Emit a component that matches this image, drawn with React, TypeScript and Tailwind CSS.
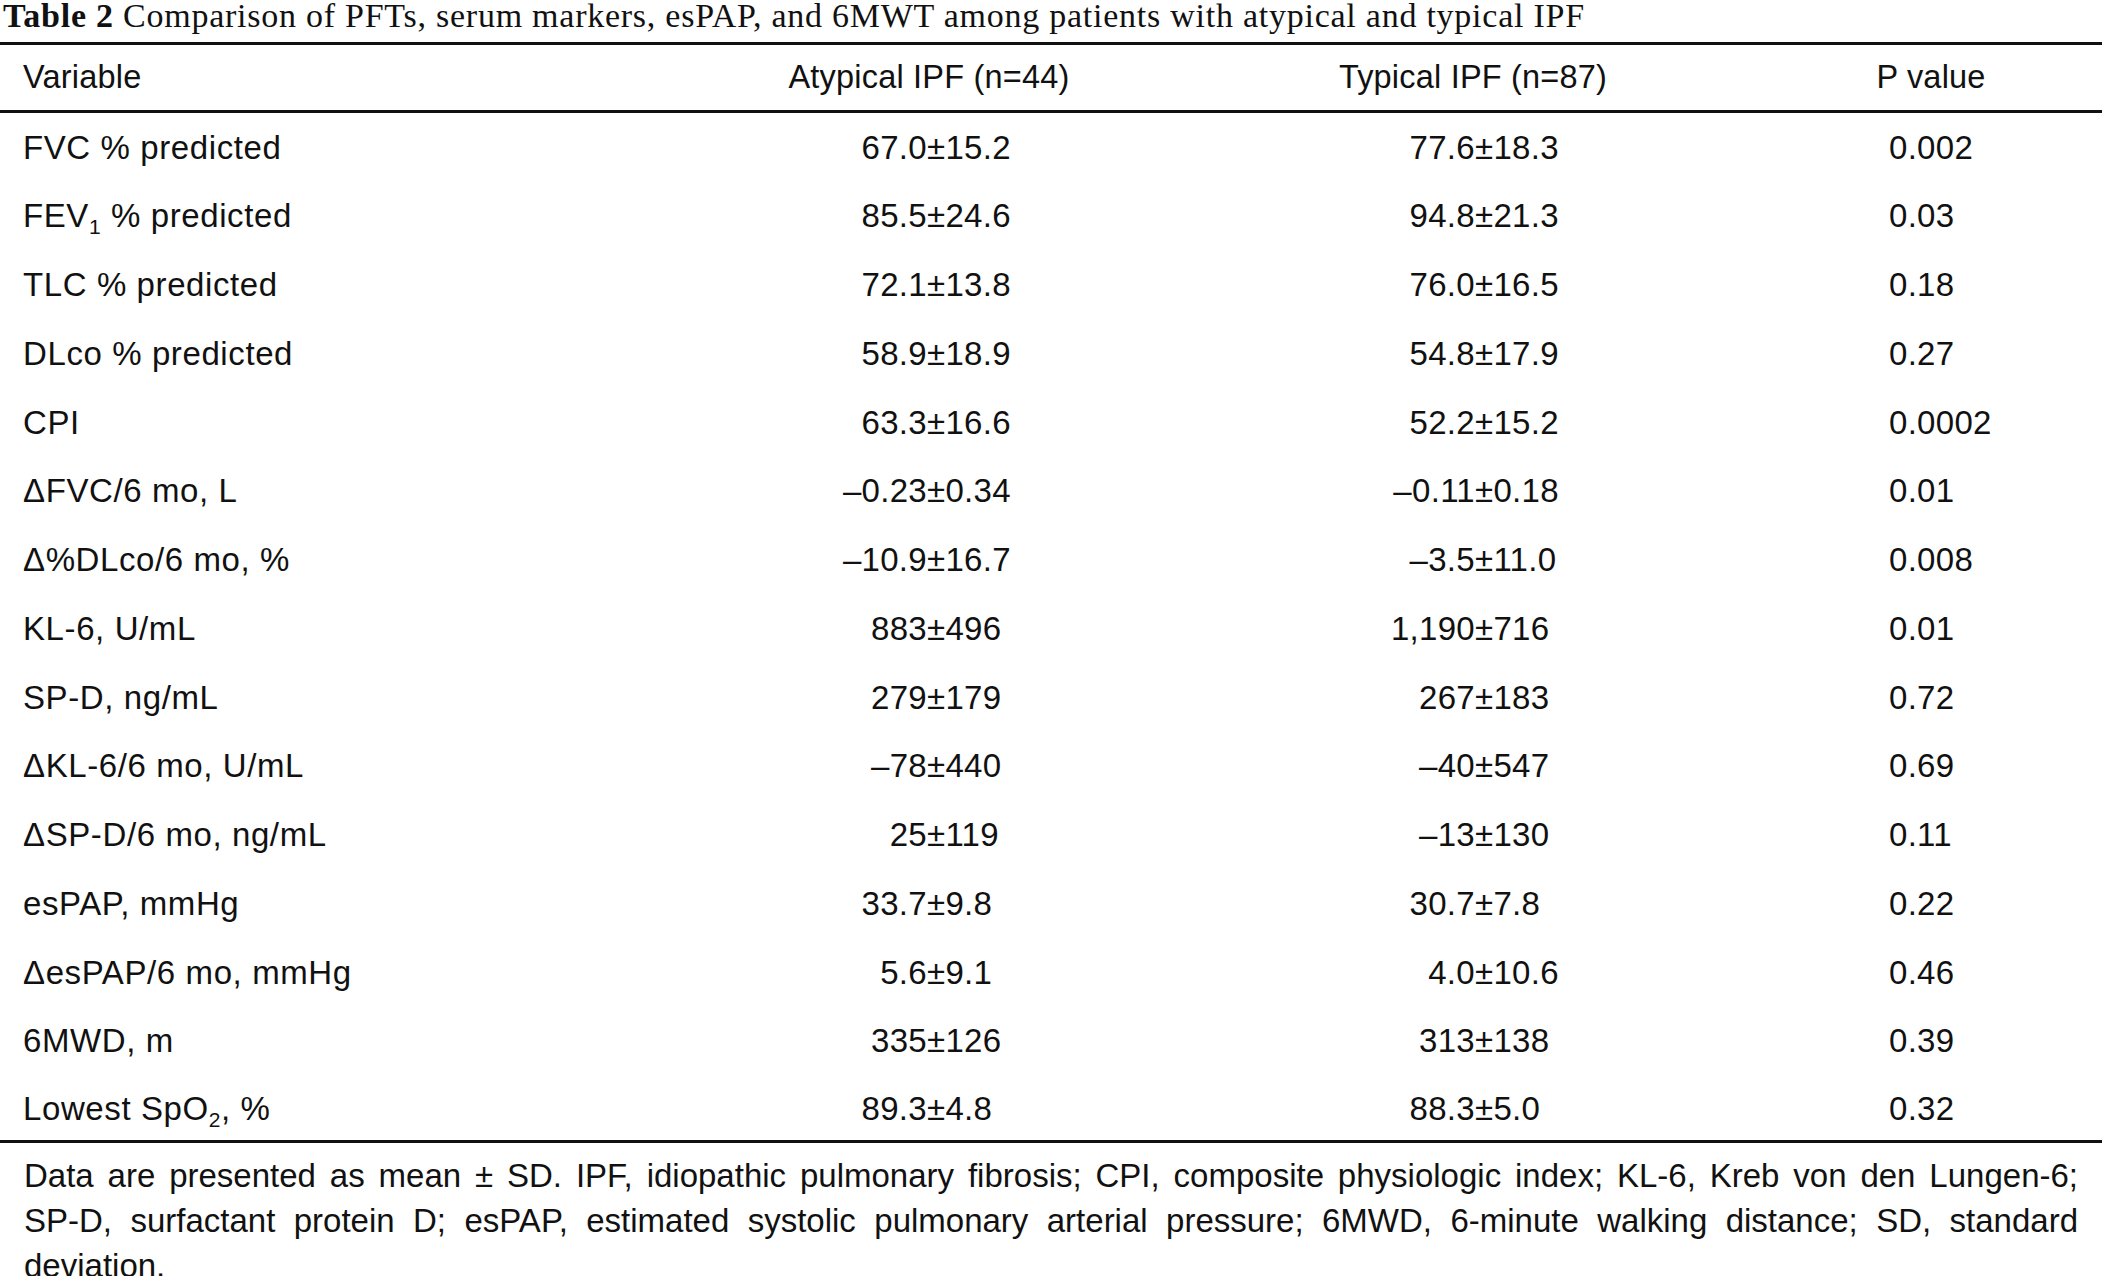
import React from "react";

type Row = {
  label: React.ReactNode;
  a: [string, string];
  t: [string, string];
  p: string;
};

const Sub = ({ children }: { children: React.ReactNode }) => (
  <span className="relative top-[7px] text-[21px] leading-none">{children}</span>
);

const rows: Row[] = [
  { label: "FVC % predicted", a: ["67.0", "15.2"], t: ["77.6", "18.3"], p: "0.002" },
  {
    label: (
      <>
        FEV<Sub>1</Sub> % predicted
      </>
    ),
    a: ["85.5", "24.6"],
    t: ["94.8", "21.3"],
    p: "0.03",
  },
  { label: "TLC % predicted", a: ["72.1", "13.8"], t: ["76.0", "16.5"], p: "0.18" },
  { label: "DLco % predicted", a: ["58.9", "18.9"], t: ["54.8", "17.9"], p: "0.27" },
  { label: "CPI", a: ["63.3", "16.6"], t: ["52.2", "15.2"], p: "0.0002" },
  { label: "\u0394FVC/6 mo, L", a: ["\u20130.23", "0.34"], t: ["\u20130.11", "0.18"], p: "0.01" },
  { label: "\u0394%DLco/6 mo, %", a: ["\u201310.9", "16.7"], t: ["\u20133.5", "11.0"], p: "0.008" },
  { label: "KL-6, U/mL", a: ["883", "496"], t: ["1,190", "716"], p: "0.01" },
  { label: "SP-D, ng/mL", a: ["279", "179"], t: ["267", "183"], p: "0.72" },
  { label: "\u0394KL-6/6 mo, U/mL", a: ["\u201378", "440"], t: ["\u201340", "547"], p: "0.69" },
  { label: "\u0394SP-D/6 mo, ng/mL", a: ["25", "119"], t: ["\u201313", "130"], p: "0.11" },
  { label: "esPAP, mmHg", a: ["33.7", "9.8"], t: ["30.7", "7.8"], p: "0.22" },
  { label: "\u0394esPAP/6 mo, mmHg", a: ["5.6", "9.1"], t: ["4.0", "10.6"], p: "0.46" },
  { label: "6MWD, m", a: ["335", "126"], t: ["313", "138"], p: "0.39" },
  {
    label: (
      <>
        Lowest SpO<Sub>2</Sub>, %
      </>
    ),
    a: ["89.3", "4.8"],
    t: ["88.3", "5.0"],
    p: "0.32",
  },
];

function DataRow({ row, last }: { row: Row; last: boolean }) {
  return (
    <div
      className={
        last
          ? "flex items-center h-[64.5px] pt-[2px]"
          : "flex items-center h-[68.75px]"
      }
    >
      <div className="w-[700px] pl-[23px] whitespace-nowrap tracking-[0.6px]">{row.label}</div>
      <div className="w-[227px] text-right whitespace-nowrap">{row.a[0]}</div>
      <div className="w-[321px] whitespace-nowrap">{"\u00b1" + row.a[1]}</div>
      <div className="w-[227px] text-right whitespace-nowrap">{row.t[0]}</div>
      <div className="w-[414px] whitespace-nowrap">{"\u00b1" + row.t[1]}</div>
      <div className="flex-1 whitespace-nowrap">{row.p}</div>
    </div>
  );
}

export default function App() {
  return (
    <div className="w-[2102px] h-[1276px] overflow-hidden bg-white text-[#111]">
      {/* Title */}
      <div className="h-[42px] pt-[2px] pl-[3px] whitespace-nowrap font-['Liberation_Serif',serif] text-[34px] leading-[28px] tracking-[0.75px]">
        <span className="font-bold">Table 2</span> Comparison of PFTs, serum markers, esPAP, and 6MWT among
        patients with atypical and typical IPF
      </div>
      <div className="h-[3px] bg-[#111]" />

      <div className="font-['Liberation_Sans',Arial,sans-serif] text-[33px] tracking-[0.3px]">
        {/* Header */}
        <div className="flex items-center h-[65px] text-[32.5px] tracking-[0.2px]">
          <div className="w-[700px] pl-[23px]">Variable</div>
          <div className="w-[458px] text-center">Atypical IPF (n=44)</div>
          <div className="w-[630px] text-center">Typical IPF (n=87)</div>
          <div className="w-[286px] text-center">P value</div>
        </div>
        <div className="h-[3px] bg-[#111]" />

        {rows.map((r, i) => (
          <DataRow key={i} row={r} last={i === rows.length - 1} />
        ))}
        <div className="h-[3px] bg-[#111]" />

        {/* Footnote */}
        <div className="pt-[10px] pl-[24px] pr-[24px] text-[33px] leading-[45px] tracking-[0px]">
          <div className="text-justify [text-align-last:justify]">
            Data are presented as mean ± SD. IPF, idiopathic pulmonary fibrosis; CPI, composite physiologic index;
            KL-6, Kreb von den Lungen-6;
          </div>
          <div className="text-justify [text-align-last:justify]">
            SP-D, surfactant protein D; esPAP, estimated systolic pulmonary arterial pressure; 6MWD, 6-minute walking
            distance; SD, standard
          </div>
          <div>deviation.</div>
        </div>
      </div>
    </div>
  );
}
